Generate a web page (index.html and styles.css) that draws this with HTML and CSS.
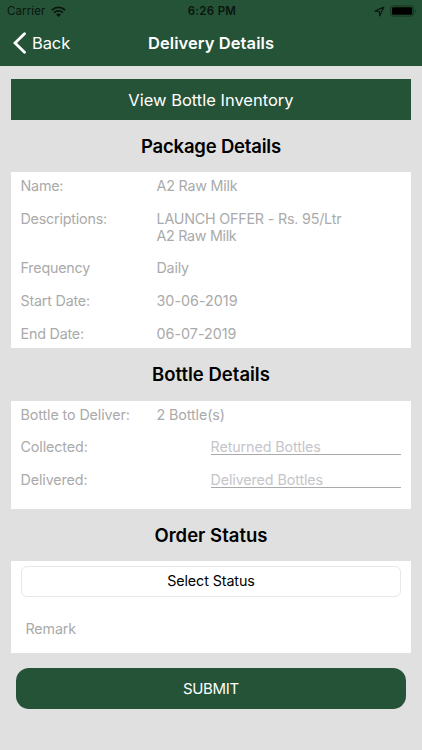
FILE: index.html
```html
<!DOCTYPE html>
<html lang="en">
<head>
<meta charset="utf-8">
<title>Delivery Details</title>
<link rel="stylesheet" href="styles.css">
</head>
<body>
<header class="header">
  <div class="status">
    <div class="carrier"><span class="carrier-name">Carrier</span>
      <svg class="wifi" width="15" height="11" viewBox="0 0 15 11"><g fill="none" stroke="#0a150e" stroke-width="1.9"><path d="M.9 4.1C4.6.4 10.4.4 14.1 4.1"/><path d="M3.2 6.6c2.3-2.3 6.3-2.3 8.6 0"/></g><path fill="#0a150e" d="M5.1 8.4c1.3-1.2 3.5-1.2 4.8 0L7.5 10.9z"/></svg>
    </div>
    <span class="time">6:26 PM</span>
    <div class="indicators">
      <svg width="11" height="11" viewBox="0 0 11 11"><path d="M9.8 1.1 1.1 5.1 5.4 5.5 5.8 9.8z" fill="none" stroke="#0a150e" stroke-width="1.2" stroke-linejoin="round"/></svg>
      <svg width="27" height="12" viewBox="0 0 27 12"><rect x=".6" y=".9" width="23" height="10.2" rx="2.5" fill="none" stroke="#17351f" stroke-width="1"/><rect x="2" y="2.3" width="20.2" height="7.4" rx="1.2"/><path d="M25 4.3c1.2.4 1.2 3 0 3.4z" fill="#17351f"/></svg>
    </div>
  </div>
  <nav class="nav">
    <div class="back"><svg width="14" height="22" viewBox="0 0 14 22"><path d="M11.5 1.7 2 11l9.5 9.3" fill="none" stroke="#fff" stroke-width="2.8" stroke-linecap="round"/></svg><span class="back-label">Back</span></div>
    <h1 class="title"><span>Delivery Details</span></h1>
  </nav>
</header>
<main class="content">
  <div class="inventory"><span>View Bottle Inventory</span></div>
  <h2 class="heading"><span class="h-package">Package Details</span></h2>
  <section class="card package">
    <div class="row"><span>Name:</span><span>A2 Raw Milk</span></div>
    <div class="row"><span>Descriptions:</span><span>LAUNCH OFFER - Rs. 95/Ltr<br><span class="tight">A2 Raw Milk</span></span></div>
    <div class="row"><span>Frequency</span><span>Daily</span></div>
    <div class="row"><span>Start Date:</span><span class="date">30-06-2019</span></div>
    <div class="row"><span>End Date:</span><span class="date">06-07-2019</span></div>
  </section>
  <h2 class="heading"><span>Bottle Details</span></h2>
  <section class="card bottles">
    <div class="row"><span>Bottle to Deliver:</span><span>2 Bottle(s)</span></div>
    <div class="row entry"><span>Collected:</span><span class="field">Returned Bottles</span></div>
    <div class="row entry"><span>Delivered:</span><span class="field">Delivered Bottles</span></div>
  </section>
  <h2 class="heading"><span>Order Status</span></h2>
  <section class="card order">
    <div class="select"><span>Select Status</span></div>
    <div class="remark">Remark</div>
  </section>
  <div class="submit"><span>SUBMIT</span></div>
</main>
</body>
</html>
```
FILE: styles.css
```css
* { box-sizing: border-box; }
body { margin: 0; height: 750px; overflow: hidden; background: #e0e0e0; font-family: Inter, "Liberation Sans", sans-serif; color: #000; }
svg { display: block; flex: none; }
.header { height: 65.5px; background: #255337; }
.status { height: 22px; display: grid; grid-template-columns: 1fr auto 1fr; align-items: center; padding: 0 5px 0 7px; font-size: 11.5px; color: #0a150e; }
.carrier { display: flex; align-items: center; gap: 6px; letter-spacing: .1px; }
.time { font-weight: 600; letter-spacing: .3px; }
.indicators { display: flex; justify-content: flex-end; align-items: center; gap: 5px; }
.nav { height: 42px; display: grid; grid-template-columns: 1fr auto 1fr; align-items: center; padding: 0 13px; color: #fff; }
.back { display: flex; align-items: center; gap: 5px; font-size: 16.5px; letter-spacing: -.1px; }
.title { margin: 0; font-size: 16.5px; font-weight: 600; letter-spacing: .08px; }
.content { padding: 13.5px 10.6px 0 10.5px; }
.inventory { height: 40.5px; display: flex; align-items: center; justify-content: center; padding-top: 1px; background: #255337; color: #fff; font-size: 16.5px; }
.heading { margin: 0; height: 52.5px; display: flex; align-items: center; justify-content: center; font-size: 18.5px; font-weight: 600; }
.h-package { letter-spacing: -.2px; }
.card { background: #fff; padding: 5.5px 10px 0; font-size: 14.3px; line-height: 17px; color: #aaa; }
.package { height: 176px; padding-top: 5px; }
.row { display: grid; grid-template-columns: 136px 1fr; margin-bottom: 15.7px; letter-spacing: -.2px; }
.tight { letter-spacing: -.3px; }
.date { letter-spacing: .02px; }
.bottles { height: 108px; padding-top: 5px; }
.bottles .row { letter-spacing: -.1px; }
.entry { grid-template-columns: 190px 1fr; margin-bottom: 15.5px; }
.field { height: 17px; line-height: 17px; border-bottom: 1px solid #aaa; color: #c5c5ca; }
.order { height: 92px; padding-top: 5px; }
.select { height: 31px; border: 1px solid #e8e8e8; border-radius: 6px; display: flex; align-items: center; justify-content: center; padding-bottom: 2px; color: #000; letter-spacing: -.1px; }
.remark { margin: 23px 5px 0; letter-spacing: -.15px; }
.submit { margin: 15px 5px 0; height: 41px; border-radius: 13px; display: flex; align-items: center; justify-content: center; background: #255337; color: #fff; font-size: 15px; letter-spacing: -.3px; }
```
